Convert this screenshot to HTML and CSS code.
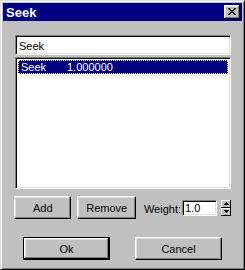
FILE: index.html
```html
<!DOCTYPE html>
<html lang="en">
<head>
    <meta charset="UTF-8">
    <title>Seek</title>
    <link rel="stylesheet" href="styles.css">
</head>
<body>
    <div class="window">
        <div class="titlebar">
            <span class="title">Seek</span>
            <button class="close-btn">
                <svg width="8" height="7" viewBox="0 0 8 7"><path d="M0 0h2v1h1v1h2v-1h1v-1h2v1h-1v1h-1v1h-1v1h1v1h1v1h1v1h-2v-1h-1v-1h-2v1h-1v1h-2v-1h1v-1h1v-1h1v-1h-1v-1h-1v-1h-1z" fill="#000"/></svg>
            </button>
        </div>

        <div class="content">
            <input class="field name-field" type="text" value="Seek">

            <div class="field list">
                <div class="list-row selected">
                    <span class="col-name">Seek</span><span class="col-weight">1.000000</span>
                </div>
            </div>

            <div class="edit-row">
                <button class="btn btn-add">Add</button>
                <button class="btn btn-remove">Remove</button>
                <label class="weight-label" for="weight">Weight:</label>
                <input class="field weight-field" id="weight" type="text" value="1.0">
                <div class="spinner">
                    <button class="spin-btn"><svg width="5" height="3" viewBox="0 0 5 3"><path d="M2 0h1v1h1v1h1v1h-5v-1h1v-1h1z" fill="#000"/></svg></button>
                    <button class="spin-btn"><svg width="5" height="3" viewBox="0 0 5 3"><path d="M0 0h5v1h-1v1h-1v1h-1v-1h-1v-1h-1z" fill="#000"/></svg></button>
                </div>
            </div>

            <div class="dialog-row">
                <button class="btn btn-dialog default">Ok</button>
                <button class="btn btn-dialog">Cancel</button>
            </div>
        </div>
    </div>
</body>
</html>
```

FILE: styles.css
```css
* {
    box-sizing: border-box;
}

body {
    margin: 0;
    font-family: "Liberation Sans", Arial, sans-serif;
    font-size: 11px;
    color: #000;
}

.window {
    width: 245px;
    height: 270px;
    background: #c0c0c0;
    border: 1px solid;
    border-color: #dfdfdf #000 #000 #dfdfdf;
    box-shadow: inset 1px 1px #fff, inset -1px -1px #808080;
    padding: 2px;
}

.titlebar {
    height: 18px;
    background: #000080;
    display: flex;
    align-items: center;
    justify-content: space-between;
    padding: 0 2px 0 3px;
}

.title {
    color: #fff;
    font-weight: bold;
    font-size: 13px;
}

.close-btn {
    width: 16px;
    height: 14px;
    padding: 0;
    border: 0;
    background: #c0c0c0;
    box-shadow: inset -1px -1px #000, inset 1px 1px #fff, inset -2px -2px #808080, inset 2px 2px #dfdfdf;
    display: flex;
    align-items: center;
    justify-content: center;
}

.close-btn svg {
    display: block;
    margin: 0 0 1px 0;
}

.content {
    padding: 14px 11px 0 12px;
}

.field {
    border: 1px solid;
    border-color: #808080 #fff #fff #808080;
    box-shadow: inset 1px 1px #000, inset -1px -1px #dfdfdf;
    background: #fff;
    font-family: inherit;
    font-size: 11px;
    color: #000;
    outline: none;
}

.name-field {
    display: block;
    width: 216px;
    height: 20px;
    padding: 2px 3px 0;
}

.list {
    width: 216px;
    height: 132px;
    margin-top: 2px;
    padding: 2px;
}

.list-row {
    height: 14px;
    line-height: 12px;
    padding: 0 2px;
    white-space: nowrap;
}

.list-row.selected {
    background: #000080;
    color: #fff;
    border: 1px dotted #ffffc0;
}

.col-name {
    display: inline-block;
    width: 46px;
}

.edit-row {
    display: flex;
    align-items: center;
    margin-top: 7px;
    margin-left: -1px;
    height: 23px;
}

.btn {
    height: 23px;
    padding: 0;
    border: 1px solid;
    border-color: #fff #000 #000 #fff;
    box-shadow: inset -1px -1px #808080, inset 1px 1px #dfdfdf;
    background: #c0c0c0;
    font-family: inherit;
    font-size: 11px;
    color: #000;
}

.btn-add {
    width: 58px;
}

.btn-remove {
    width: 59px;
    margin-left: 6px;
}

.weight-label {
    margin-left: 8px;
    margin-right: 1px;
    padding-top: 2px;
}

.weight-field {
    width: 35px;
    height: 16px;
    padding: 1px 2px 0;
}

.spinner {
    display: flex;
    flex-direction: column;
    margin-left: 4px;
}

.spin-btn {
    width: 10px;
    height: 8px;
    padding: 0;
    border: 0;
    background: #c0c0c0;
    box-shadow: inset -1px -1px #000, inset 1px 1px #fff;
    display: flex;
    align-items: center;
    justify-content: center;
}

.spin-btn svg {
    display: block;
}

.dialog-row {
    display: flex;
    justify-content: center;
    gap: 25px;
    margin-top: 18px;
    margin-left: -12px;
    margin-right: -11px;
}

.btn-dialog {
    width: 87px;
}

.btn.default {
    border: 1px solid #000;
    box-shadow: inset -1px -1px #000, inset 1px 1px #fff, inset -2px -2px #808080, inset 2px 2px #dfdfdf;
}
```
